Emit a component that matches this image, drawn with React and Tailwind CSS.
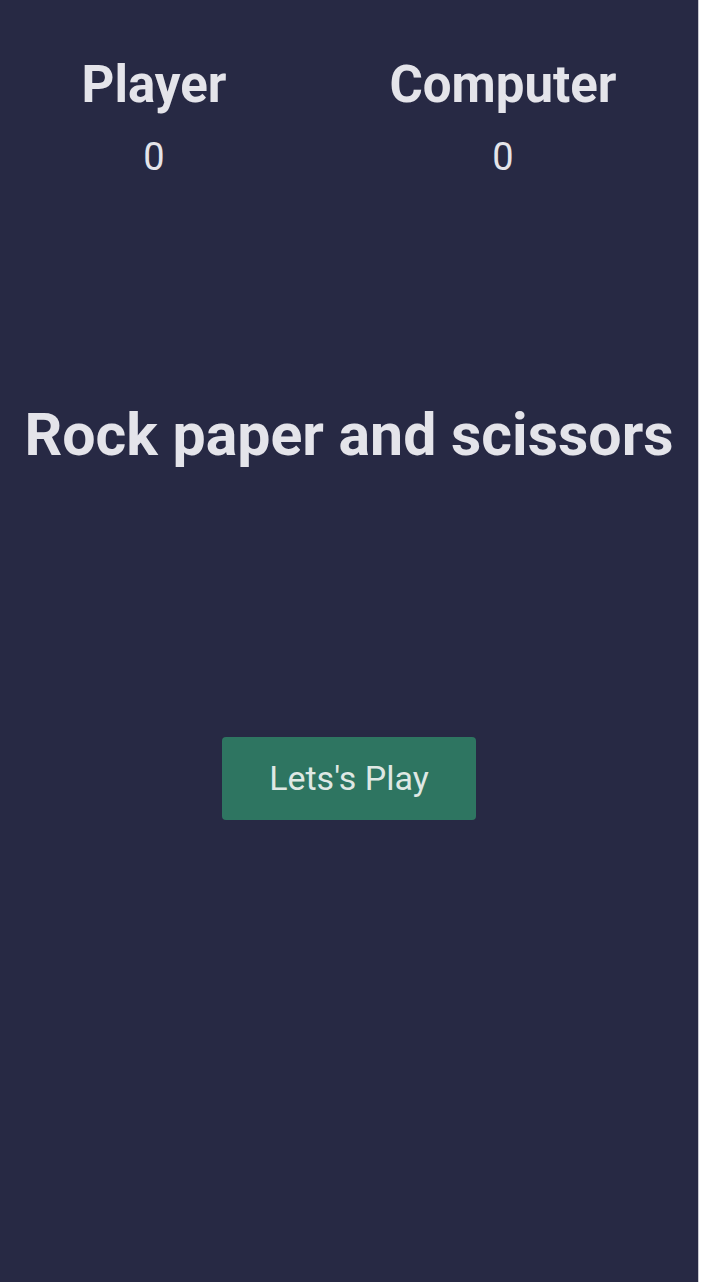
import React, { useState } from 'react';

const App = () => {
  const [playerScore] = useState(0);
  const [computerScore] = useState(0);

  return (
    <div className="flex min-h-[1282px] bg-white" style={{ fontFamily: 'Roboto, "Noto Sans", sans-serif' }}>
      <div className="w-[698px] min-h-[1282px] bg-[#272944] text-[#e4e4ea] flex flex-col">
        <div className="flex justify-around pt-[53px]">
          <div className="flex flex-col items-center">
            <h2 className="text-[51px] font-bold leading-[64px]">Player</h2>
            <p className="text-[38px] leading-[44px] mt-[18px]">{playerScore}</p>
          </div>
          <div className="flex flex-col items-center">
            <h2 className="text-[51px] font-bold leading-[64px]">Computer</h2>
            <p className="text-[38px] leading-[44px] mt-[18px]">{computerScore}</p>
          </div>
        </div>

        <h1 className="text-center text-[59px] font-bold leading-[68px] mt-[222px]">Rock paper and scissors</h1>

        <div className="flex justify-center mt-[268px]">
          <button className="w-[254px] h-[83px] bg-[#2e7561] rounded-[4px] text-[34px] text-[#dfe8e4]">
            Lets's Play
          </button>
        </div>
      </div>
      <div className="w-px bg-[#c8c8d0]"></div>
    </div>
  );
};

export default App;
